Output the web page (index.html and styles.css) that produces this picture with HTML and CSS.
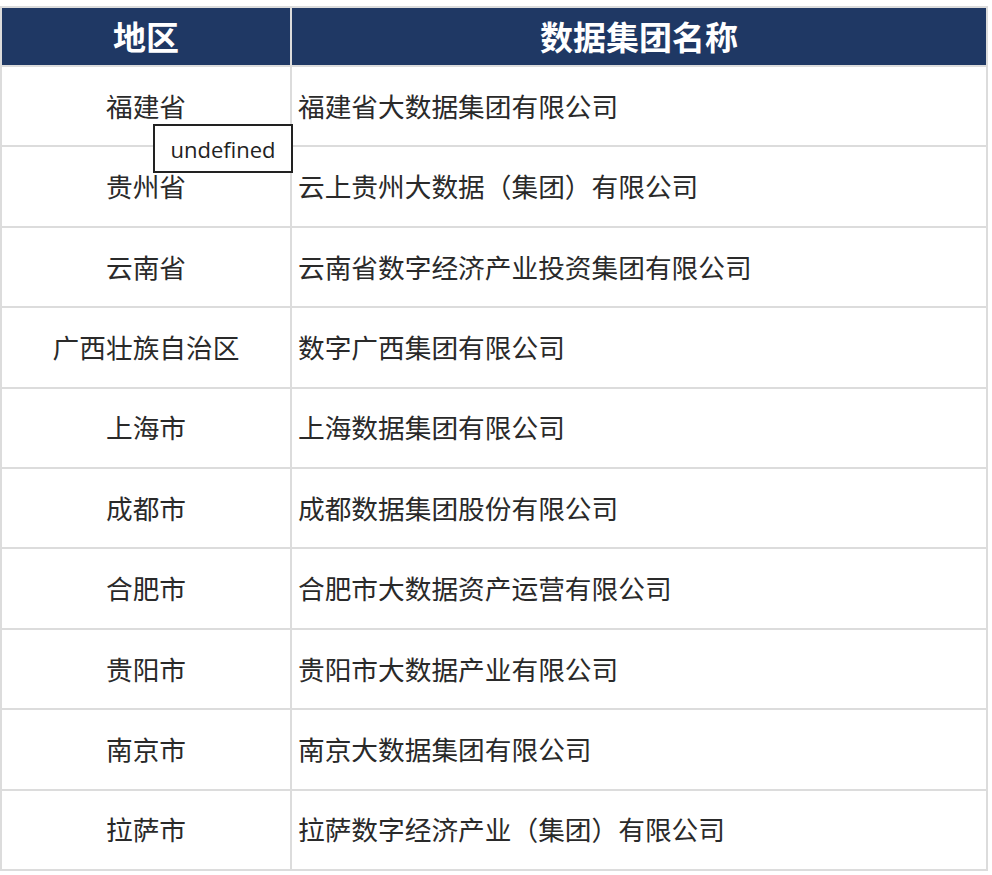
FILE: index.html
```html
<!DOCTYPE html>
<html lang="zh-CN">
<head>
<meta charset="utf-8">
<title>数据集团</title>
<link rel="stylesheet" href="styles.css">
</head>
<body>
<div class="wrap">
<table class="grid">
  <colgroup><col class="c1"><col class="c2"></colgroup>
  <thead>
    <tr><th>地区</th><th>数据集团名称</th></tr>
  </thead>
  <tbody>
    <tr><td class="region">福建省</td><td class="name">福建省大数据集团有限公司</td></tr>
    <tr><td class="region">贵州省</td><td class="name">云上贵州大数据（集团）有限公司</td></tr>
    <tr><td class="region">云南省</td><td class="name">云南省数字经济产业投资集团有限公司</td></tr>
    <tr><td class="region">广西壮族自治区</td><td class="name">数字广西集团有限公司</td></tr>
    <tr><td class="region">上海市</td><td class="name">上海数据集团有限公司</td></tr>
    <tr><td class="region">成都市</td><td class="name">成都数据集团股份有限公司</td></tr>
    <tr><td class="region">合肥市</td><td class="name">合肥市大数据资产运营有限公司</td></tr>
    <tr><td class="region">贵阳市</td><td class="name">贵阳市大数据产业有限公司</td></tr>
    <tr><td class="region">南京市</td><td class="name">南京大数据集团有限公司</td></tr>
    <tr><td class="region">拉萨市</td><td class="name">拉萨数字经济产业（集团）有限公司</td></tr>
  </tbody>
</table>
<div class="tip">undefined</div>
</div>
</body>
</html>
```
FILE: styles.css
```css
html, body {
  margin: 0;
  padding: 0;
  background: #ffffff;
}
.wrap {
  position: relative;
  padding-top: 6px;
  width: 986px;
}
.grid {
  border-collapse: collapse;
  width: 986px;
  table-layout: fixed;
  font-family: "Noto Sans CJK SC", "Noto Sans", sans-serif;
}
.c1 { width: 290px; }
.c2 { width: 696px; }
.grid th, .grid td {
  border: 2px solid #dcdcdc;
  padding: 0;
}
.grid th {
  background: #1f3864;
  color: #ffffff;
  font-size: 33px;
  font-weight: 700;
  height: 57px;
  text-align: center;
  line-height: 1;
}
.grid td {
  height: 78.4px;
  font-size: 26.7px;
  font-weight: 400;
  color: #2a2a2a;
  line-height: 1;
}
.region {
  text-align: center;
}
.name {
  text-align: left;
  padding-left: 6px !important;
}
.tip {
  position: absolute;
  left: 153px;
  top: 124px;
  width: 140px;
  height: 49px;
  border: 2px solid #222222;
  background: #ffffff;
  box-sizing: border-box;
  font-family: "Open Sans", "Noto Sans", sans-serif;
  font-size: 22px;
  color: #222222;
  display: flex;
  align-items: center;
  justify-content: center;
}
```
